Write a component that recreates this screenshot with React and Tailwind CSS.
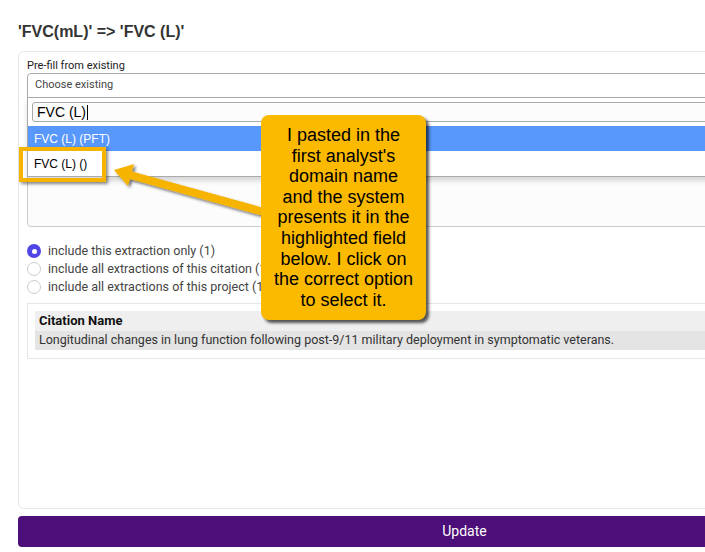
export default function App(){
  const radios = [
    { label: 'include this extraction only (1)', checked: true },
    { label: 'include all extractions of this citation (1)', checked: false },
    { label: 'include all extractions of this project (1)', checked: false },
  ]

  return (
    <div className="relative w-[705px] h-[552px] overflow-hidden bg-white font-['Roboto',sans-serif] text-[#333]">
      <div className="w-[893px] ml-[18px]">
        <h2 className="pt-[20px] leading-[24px] text-[16px] font-bold text-[#333] font-['Liberation_Sans',Arial,sans-serif]">'FVC(mL)' =&gt; 'FVC (L)'</h2>

        <div className="mt-[7px] h-[458px] border border-[#e6e6e6] rounded-[6px] px-[8px] pt-[6px]">
          <div className="text-[11px] leading-[15px] text-[#222]">Pre-fill from existing</div>

          <div className="relative">
            <div className="h-[25px] border border-[#aaa] rounded-t-[4px] flex items-center pl-[7px] text-[11px] text-[#444]">Choose existing</div>

            {/* open dropdown */}
            <div className="absolute left-0 right-0 top-[24px] z-10 bg-white border border-[#aaa] shadow-[0_4px_5px_rgba(0,0,0,0.15)] font-['Liberation_Sans',Arial,sans-serif]">
              <div className="p-[4px]">
                <div className="h-[20px] border border-[#aaa] rounded-[3px] bg-[#fcfcfc] flex items-center pl-[4px] text-[14px] text-black">
                  FVC (L)<span className="w-px h-[15px] bg-black ml-px"></span>
                </div>
              </div>
              <div className="h-[25px] bg-[#5897fb] text-white text-[12px] flex items-center pl-[6px]">FVC (L) (PFT)</div>
              <div className="h-[25px] text-black text-[12px] flex items-center pl-[6px]">FVC (L) ()</div>
            </div>
          </div>

          <textarea className="block mt-[5px] w-full h-[124px] border border-[#ccc] rounded-[4px] bg-[#fcfcfc] resize-none" />

          <div className="mt-[15px]">
            {radios.map(r => (
              <label key={r.label} className="h-[18px] flex items-center text-[12.5px] text-[#444]">
                {r.checked ? (
                  <span className="w-[14px] h-[14px] rounded-full bg-[#4f46e5] flex items-center justify-center">
                    <span className="w-[5px] h-[5px] rounded-full bg-white"></span>
                  </span>
                ) : (
                  <span className="w-[14px] h-[14px] rounded-full border border-[#ccc] bg-white"></span>
                )}
                <span className="ml-[7px]">{r.label}</span>
              </label>
            ))}
          </div>

          <div className="mt-[7px] border border-[#e6e6e6] p-[7px] pb-[8px]">
            <table className="w-full text-left border-collapse">
              <thead>
                <tr className="bg-[#efefef]">
                  <th className="h-[20px] px-[4px] text-[13px] font-bold text-[#111]">Citation Name</th>
                </tr>
              </thead>
              <tbody>
                <tr className="bg-[#e4e4e4]">
                  <td className="h-[19px] px-[4px] text-[12.5px] text-[#333]">Longitudinal changes in lung function following post-9/11 military deployment in symptomatic veterans.</td>
                </tr>
              </tbody>
            </table>
          </div>
        </div>

        <button className="mt-[7px] w-full h-[31px] rounded-[4px] bg-[#4c0e78] text-white text-[14px]">Update</button>
      </div>

      {/* annotation: highlight box */}
      <div className="absolute z-20 left-[19px] top-[147px] w-[87px] h-[35px] border-4 border-[#f6b400] shadow-[2px_2px_3px_rgba(0,0,0,0.45)]"></div>

      {/* annotation: arrow */}
      <svg className="absolute z-20 left-[100px] top-[150px]" width="180" height="80" viewBox="0 0 180 80">
        <defs>
          <filter id="sh" x="-20%" y="-40%" width="140%" height="180%">
            <feDropShadow dx="2" dy="2" stdDeviation="1.5" floodColor="#000" floodOpacity="0.55" />
          </filter>
        </defs>
        <g filter="url(#sh)">
          <line x1="30" y1="25" x2="160" y2="61" stroke="#f6b400" strokeWidth="8" strokeLinecap="round" />
          <polygon points="14,20 34,14 28,36" fill="#f6b400" />
        </g>
      </svg>

      {/* annotation: callout */}
      <div className="absolute z-20 left-[261px] top-[115px] w-[165px] h-[205px] rounded-[8px] bg-[#fbb900] shadow-[3px_3px_3px_rgba(0,0,0,0.65)] py-[10px] text-center text-[18px] leading-[20.6px] text-black font-['Liberation_Sans',Arial,sans-serif]">
        I pasted in the<br />first analyst's<br />domain name<br />and the system<br />presents it in the<br />highlighted field<br />below. I click on<br />the correct option<br />to select it.
      </div>
    </div>
  )
}
